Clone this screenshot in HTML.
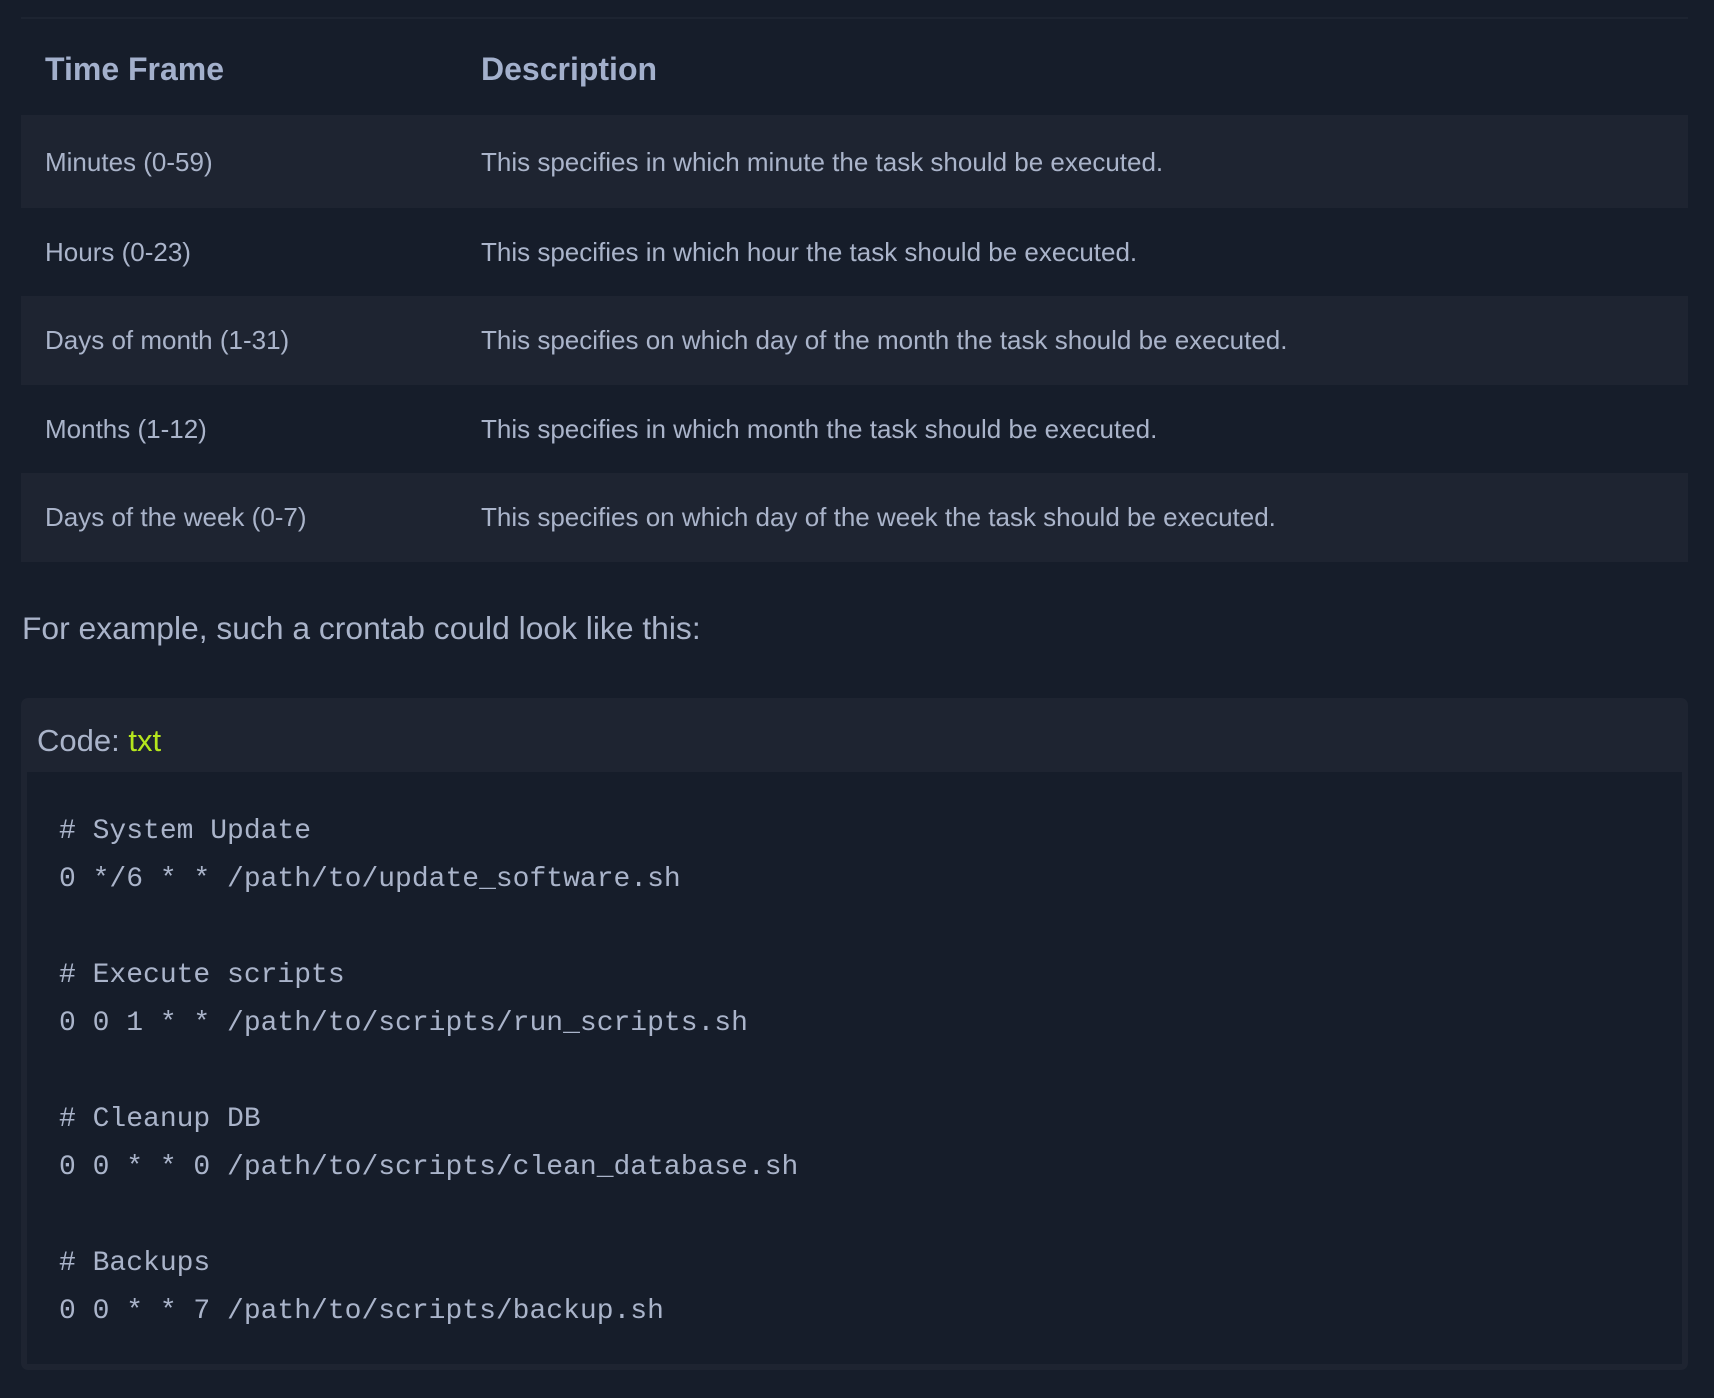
<!DOCTYPE html>
<html><head><meta charset="utf-8"><style>
html,body{margin:0;padding:0;background:#161d2a;width:1714px;height:1398px;overflow:hidden;font-family:"Liberation Sans",sans-serif;color:#aab4ca}
.topline{position:absolute;left:21px;right:26px;top:17px;height:2px;background:#1d2431}
.row{position:absolute;left:21px;width:1667px;height:89px}
.row.bg{background:#1e2431}
.c1,.c2{position:absolute;top:0;line-height:89px;font-size:26px;white-space:nowrap}
.c1{left:24px}.c2{left:460px}
.hdr .c1,.hdr .c2{font-weight:bold;font-size:32px;color:#a3b0cc;line-height:94px;top:1px}
.p{position:absolute;left:22px;top:608px;font-size:31.8px;line-height:40px;color:#aab4ca}
.code{position:absolute;left:21px;top:698px;width:1667px;height:672px;background:#1e2431;border-radius:7px}
.code .h{position:absolute;left:16px;top:24px;font-size:31px;line-height:38px}
.code .h span{color:#b5e61d}
.inner{position:absolute;left:6px;top:74px;width:1655px;height:592px;background:#161d2a}
pre{margin:0;position:absolute;left:32px;top:36px;font-family:"Liberation Mono",monospace;font-size:28px;line-height:48px;color:#aab4ca}
</style></head><body>
<div class="topline"></div>
<div class="row hdr" style="top:21px;height:94px"><div class="c1">Time Frame</div><div class="c2">Description</div></div>
<div class="row bg" style="top:115px;height:93px"><div class="c1" style="top:3px">Minutes (0-59)</div><div class="c2" style="top:3px">This specifies in which minute the task should be executed.</div></div>
<div class="row" style="top:208px;height:88px"><div class="c1">Hours (0-23)</div><div class="c2">This specifies in which hour the task should be executed.</div></div>
<div class="row bg" style="top:296px"><div class="c1">Days of month (1-31)</div><div class="c2">This specifies on which day of the month the task should be executed.</div></div>
<div class="row" style="top:385px;height:88px"><div class="c1">Months (1-12)</div><div class="c2">This specifies in which month the task should be executed.</div></div>
<div class="row bg" style="top:473px"><div class="c1">Days of the week (0-7)</div><div class="c2">This specifies on which day of the week the task should be executed.</div></div>
<div class="p">For example, such a crontab could look like this:</div>
<div class="code"><div class="h">Code: <span>txt</span></div>
<div class="inner"><pre># System Update
0 */6 * * /path/to/update_software.sh

# Execute scripts
0 0 1 * * /path/to/scripts/run_scripts.sh

# Cleanup DB
0 0 * * 0 /path/to/scripts/clean_database.sh

# Backups
0 0 * * 7 /path/to/scripts/backup.sh</pre></div></div>
</body></html>
